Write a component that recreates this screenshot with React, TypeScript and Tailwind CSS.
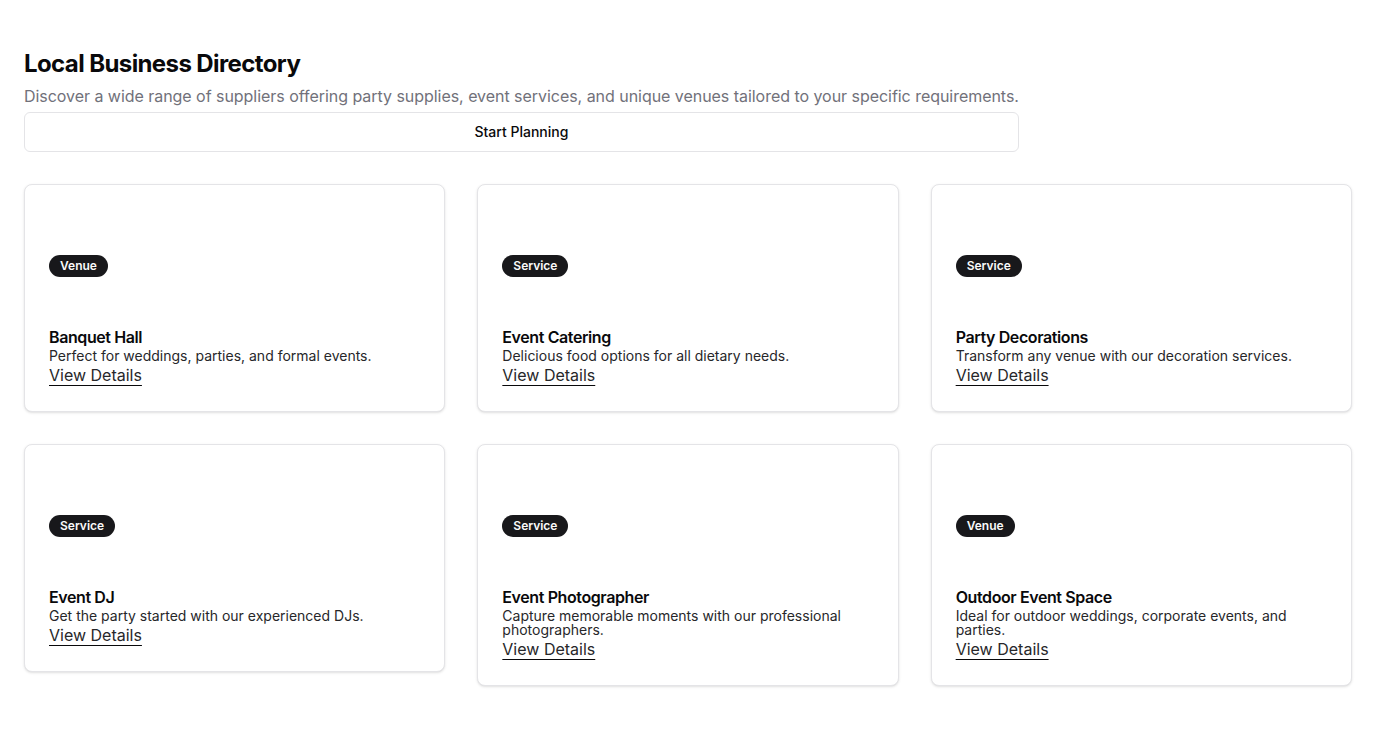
import React from "react";

type Item = { tag: string; title: string; desc: string };

const items: Item[] = [
  { tag: "Venue", title: "Banquet Hall", desc: "Perfect for weddings, parties, and formal events." },
  { tag: "Service", title: "Event Catering", desc: "Delicious food options for all dietary needs." },
  { tag: "Service", title: "Party Decorations", desc: "Transform any venue with our decoration services." },
  { tag: "Service", title: "Event DJ", desc: "Get the party started with our experienced DJs." },
  { tag: "Service", title: "Event Photographer", desc: "Capture memorable moments with our professional photographers." },
  { tag: "Venue", title: "Outdoor Event Space", desc: "Ideal for outdoor weddings, corporate events, and parties." },
];

export default function App() {
  return (
    <div
      className="min-h-screen bg-white px-6 pt-12 pb-12 text-[#09090b]"
      style={{ fontFamily: "Inter, 'Noto Sans', sans-serif" }}
    >
      <div className="flex w-fit flex-col gap-1">
        <h1 className="text-2xl leading-8 font-bold tracking-tight">Local Business Directory</h1>
        <p className="text-base leading-6 tracking-[-0.04px] text-[#71717a]">
          Discover a wide range of suppliers offering party supplies, event services, and unique venues tailored to your specific requirements.
        </p>
        <button className="h-10 w-full rounded-md border border-[#e4e4e7] bg-white text-sm font-medium text-[#09090b]">
          Start Planning
        </button>
      </div>

      <div className="mt-8 grid grid-cols-3 items-start gap-8">
        {items.map((it) => (
          <div
            key={it.title}
            className="rounded-lg border border-[#e4e4e7] bg-white p-6 shadow-sm"
          >
            <div className="flex h-[116px] items-center pb-0.5">
              <span className="inline-flex items-center rounded-full border border-transparent bg-[#18181b] px-2.5 py-0.5 text-xs font-semibold text-[#fafafa]">
                {it.tag}
              </span>
            </div>
            <h3 className="text-base leading-6 font-semibold tracking-tight">{it.title}</h3>
            <p className="text-sm leading-none text-[#27272a]">{it.desc}</p>
            <a href="#" className="text-base leading-6 text-[#27272a] underline decoration-[#09090b] underline-offset-4">
              View Details
            </a>
          </div>
        ))}
      </div>
    </div>
  );
}
